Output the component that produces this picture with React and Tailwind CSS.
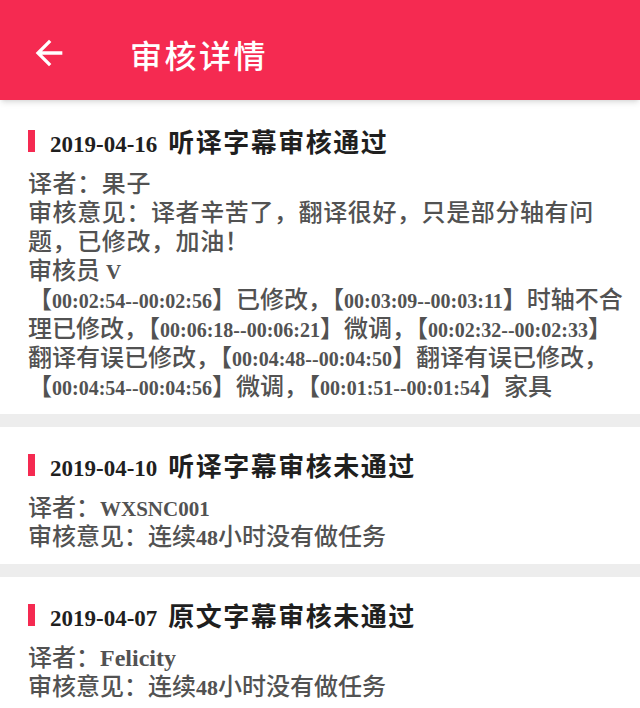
const RED = "bg-[#f52a51]";

function Stamp({ children }) {
  return <span className="font-['Liberation_Serif'] font-bold text-[20px] leading-none">{children}</span>;
}

function Latin({ children, size = "text-[21px]" }) {
  return <span className={`font-['Liberation_Serif'] font-bold leading-none ${size}`}>{children}</span>;
}

function Line({ children, wide }) {
  return <div className={`h-[29px] ${wide ? "tracking-[0.6px]" : ""}`}>{children}</div>;
}

function Card({ date, title, first, children }) {
  return (
    <div className={`bg-white px-[28px] pb-[12px] ${first ? "pt-[26px]" : "pt-[23px]"}`}>
      <div className="flex items-start h-[36px]">
        <div className={`w-[7px] h-[22px] mt-[4px] ${RED}`} />
        <div className="ml-[15px] flex items-baseline leading-[36px] text-[#1f1f1f] whitespace-nowrap">
          <span className="font-['Liberation_Serif'] font-bold text-[23px]">{date}</span>
          <span className="ml-[11px] text-[26px] tracking-[1.5px] font-bold">{title}</span>
        </div>
      </div>
      <div className="mt-[8px] text-[24px] leading-[29px] text-[#525252] font-medium whitespace-nowrap">
        {children}
      </div>
    </div>
  );
}

export default function App() {
  return (
    <div className="min-h-screen bg-[#ededed] font-['Liberation_Serif','Noto_Sans_CJK_SC',serif]">
      {/* Header */}
      <div className={`relative z-10 h-[100px] ${RED} flex items-center shadow-md`}>
        <svg viewBox="0 0 24 24" width="40" height="40" className="ml-[29px] mt-[6px] fill-white">
          <path d="M20 11H7.83l5.59-5.59L12 4l-8 8 8 8 1.41-1.41L7.83 13H20v-2z" />
        </svg>
        <h1 className="ml-[61px] text-white text-[32px] tracking-[2.5px] font-medium leading-none mt-[8px] font-['Noto_Sans_CJK_SC',sans-serif]">
          审核详情
        </h1>
      </div>

      <div className="space-y-[13px]">
        <Card first date="2019-04-16" title="听译字幕审核通过">
          <Line wide>译者：果子</Line>
          <Line wide>审核意见：译者辛苦了，翻译很好，只是部分轴有问</Line>
          <Line wide>题，已修改，加油！</Line>
          <Line>审核员 <Latin>V</Latin></Line>
          <Line>【<Stamp>00:02:54--00:02:56</Stamp>】已修改，【<Stamp>00:03:09--00:03:11</Stamp>】时轴不合</Line>
          <Line>理已修改，【<Stamp>00:06:18--00:06:21</Stamp>】微调，【<Stamp>00:02:32--00:02:33</Stamp>】</Line>
          <Line>翻译有误已修改，【<Stamp>00:04:48--00:04:50</Stamp>】翻译有误已修改，</Line>
          <Line>【<Stamp>00:04:54--00:04:56</Stamp>】微调，【<Stamp>00:01:51--00:01:54</Stamp>】家具</Line>
        </Card>

        <Card date="2019-04-10" title="听译字幕审核未通过">
          <Line>译者：<Latin>WXSNC001</Latin></Line>
          <Line>审核意见：连续<Latin size="text-[22px]">48</Latin>小时没有做任务</Line>
        </Card>

        <Card date="2019-04-07" title="原文字幕审核未通过">
          <Line>译者：<Latin size="text-[24px]">Felicity</Latin></Line>
          <Line>审核意见：连续<Latin size="text-[22px]">48</Latin>小时没有做任务</Line>
        </Card>
      </div>
    </div>
  );
}
